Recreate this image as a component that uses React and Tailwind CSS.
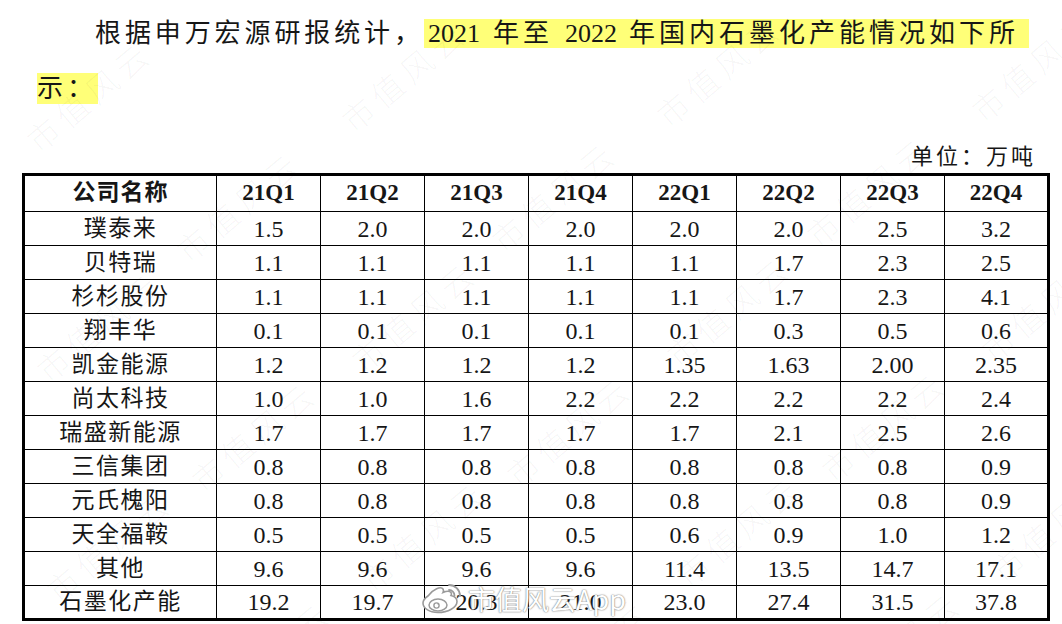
const headers = ['21Q1', '21Q2', '21Q3', '21Q4', '22Q1', '22Q2', '22Q3', '22Q4']

const rows = [
  ['璞泰来', '1.5', '2.0', '2.0', '2.0', '2.0', '2.0', '2.5', '3.2'],
  ['贝特瑞', '1.1', '1.1', '1.1', '1.1', '1.1', '1.7', '2.3', '2.5'],
  ['杉杉股份', '1.1', '1.1', '1.1', '1.1', '1.1', '1.7', '2.3', '4.1'],
  ['翔丰华', '0.1', '0.1', '0.1', '0.1', '0.1', '0.3', '0.5', '0.6'],
  ['凯金能源', '1.2', '1.2', '1.2', '1.2', '1.35', '1.63', '2.00', '2.35'],
  ['尚太科技', '1.0', '1.0', '1.6', '2.2', '2.2', '2.2', '2.2', '2.4'],
  ['瑞盛新能源', '1.7', '1.7', '1.7', '1.7', '1.7', '2.1', '2.5', '2.6'],
  ['三信集团', '0.8', '0.8', '0.8', '0.8', '0.8', '0.8', '0.8', '0.9'],
  ['元氏槐阳', '0.8', '0.8', '0.8', '0.8', '0.8', '0.8', '0.8', '0.9'],
  ['天全福鞍', '0.5', '0.5', '0.5', '0.5', '0.6', '0.9', '1.0', '1.2'],
  ['其他', '9.6', '9.6', '9.6', '9.6', '11.4', '13.5', '14.7', '17.1'],
  ['石墨化产能', '19.2', '19.7', '20.3', '21.0', '23.0', '27.4', '31.5', '37.8'],
]

// faint diagonal watermark positions (left, top)
const marks = [
  [30, 40], [345, 20], [660, 15], [975, 10],
  [180, 150], [495, 140], [810, 135],
  [40, 270], [355, 260], [670, 255], [985, 250],
  [195, 380], [510, 375], [825, 370],
  [50, 490], [365, 480], [680, 475], [995, 470],
  [210, 600], [525, 595], [840, 590],
]

const WeiboLogo = () => (
  <svg width="44" height="34" viewBox="0 0 44 34" fill="none">
    <path d="M8 14c5-7 13-10 15-7 1 1.5 0 3.5 0 3.5s6-2.5 8 0c1 1.5 0 3 0 3 4 1 6 3 6 6 0 6-9 11-19 11C9 30.5 3 26 3 21c0-2.5 2-5 5-7z" fill="#fff" stroke="#9a9a9a" strokeWidth="1.6" />
    <ellipse cx="18" cy="23" rx="9" ry="6" stroke="#9a9a9a" strokeWidth="1.5" />
    <circle cx="16.5" cy="23.5" r="2.6" stroke="#9a9a9a" strokeWidth="1.4" />
    <circle cx="18.2" cy="22" r="0.8" fill="#9a9a9a" />
    <path d="M29 3a11 11 0 0 1 11 11" stroke="#9a9a9a" strokeWidth="1.8" strokeLinecap="round" />
    <path d="M29 8a5.5 5.5 0 0 1 5.5 5.5" stroke="#9a9a9a" strokeWidth="1.8" strokeLinecap="round" />
  </svg>
)

const App = () => {
  return (
    <div className="relative w-[1062px] h-[624px] overflow-hidden bg-white text-[#161616] font-['Liberation_Serif','Noto_Sans_CJK_SC',serif]">
      {/* 正文段落 */}
      <div className="pt-[6px] pl-[37px] text-[26px]">
        <div className="flex items-center h-[55px] whitespace-nowrap">
          <span className="pl-[58px] tracking-[3.9px]">根据申万宏源研报统计，</span>
          <span className="flex items-center h-[29px] bg-[#ffff78] pl-[4px] pr-[10px] leading-[29px]">
            <span>2021</span>
            <span className="ml-[13px] tracking-[4px]">年至</span>
            <span className="ml-[12px]">2022</span>
            <span className="ml-[12px] tracking-[4px]">年国内石墨化产能情况如下所</span>
          </span>
        </div>
        <div className="flex items-center h-[55px]">
          <span className="h-[31px] leading-[31px] bg-[#ffff78] tracking-[4px] pr-[1px]">示：</span>
        </div>
      </div>

      {/* 单位 */}
      <div className="mt-[26px] h-[30px] pr-[26px] text-right text-[22px] leading-[30px] tracking-[3px]">单位：万吨</div>

      {/* 表格 */}
      <table className="ml-[22px] mt-[1px] border-collapse border-[3px] border-black table-fixed">
        <colgroup>
          <col className="w-[193px]" />
          {headers.map(h => (
            <col key={h} className="w-[104px]" />
          ))}
        </colgroup>
        <thead>
          <tr className="h-[37px]">
            <th className="border border-black text-[23px] font-bold tracking-[1px] p-0">公司名称</th>
            {headers.map(h => (
              <th key={h} className="border border-black text-[23px] font-bold p-0">
                {h}
              </th>
            ))}
          </tr>
        </thead>
        <tbody>
          {rows.map(r => (
            <tr key={r[0]} className="h-[34px]">
              <td className="border border-black text-center text-[23px] tracking-[1.5px] p-0 leading-[30px]">{r[0]}</td>
              {r.slice(1).map((v, i) => (
                <td key={i} className="border border-black text-center text-[24px] p-0 leading-[30px]">
                  {v}
                </td>
              ))}
            </tr>
          ))}
        </tbody>
      </table>

      {/* 水印 */}
      {marks.map(([x, y], i) => (
        <div
          key={i}
          className="absolute pointer-events-none whitespace-nowrap text-[32px] font-['Noto_Sans_CJK_SC',sans-serif] font-light text-black/[0.04] -rotate-[40deg] origin-left tracking-[6px]"
          style={{ left: x, top: y + 80 }}
        >
          市值风云
        </div>
      ))}

      {/* 微博水印 */}
      <div className="absolute left-[420px] top-[582px] flex items-center gap-[4px] pointer-events-none">
        <WeiboLogo />
        <span className="text-[27px] leading-[34px] text-white font-['Noto_Sans_CJK_SC',sans-serif] [text-shadow:0_0_1px_#777,0_0_2px_#999]">
          市值风云App
        </span>
      </div>
    </div>
  )
}

export default App
